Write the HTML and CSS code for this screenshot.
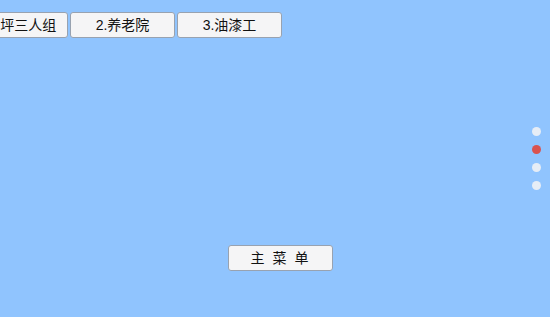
FILE: index.html
```html
<!DOCTYPE html>
<html lang="zh-CN">
<head>
  <meta charset="UTF-8">
  <meta name="viewport" content="width=device-width, initial-scale=1.0">
  <title>主菜单</title>
  <link rel="stylesheet" href="styles.css">
</head>
<body>

  <div class="tabs">
    <div class="tab">1.草坪三人组</div>
    <div class="tab">2.养老院</div>
    <div class="tab">3.油漆工</div>
  </div>

  <div class="menu-row">
    <div class="menu-btn">主 菜 单</div>
  </div>

  <div class="pager">
    <span class="dot"></span>
    <span class="dot on"></span>
    <span class="dot"></span>
    <span class="dot"></span>
  </div>

</body>
</html>
```

FILE: styles.css
```css
html, body {
  margin: 0;
  height: 100%;
}
body {
  background: #90c4fe;
  font-family: 'Liberation Sans', 'Noto Sans CJK SC', sans-serif;
  color: #111;
  position: relative;
  overflow: hidden;
}
.tabs {
  display: flex;
  gap: 2px;
  margin-top: 12px;
  margin-left: -37px;
}
.tab, .menu-btn {
  flex: none;
  box-sizing: border-box;
  width: 105px;
  height: 26px;
  line-height: 24px;
  text-align: center;
  font-size: 14px;
  background: #f5f5f6;
  border: 1px solid #98a2b0;
  border-radius: 3px;
  white-space: nowrap;
}
.menu-row {
  display: flex;
  margin-top: 207px;
  padding-left: 228px;
}
.menu-btn { letter-spacing: 2px; }
.pager {
  position: absolute;
  right: 9px;
  top: 127px;
  display: flex;
  flex-direction: column;
  gap: 9px;
}
.dot {
  width: 9px;
  height: 9px;
  border-radius: 50%;
  background: #e6edf6;
}
.dot.on { background: #d9524e; }
```
